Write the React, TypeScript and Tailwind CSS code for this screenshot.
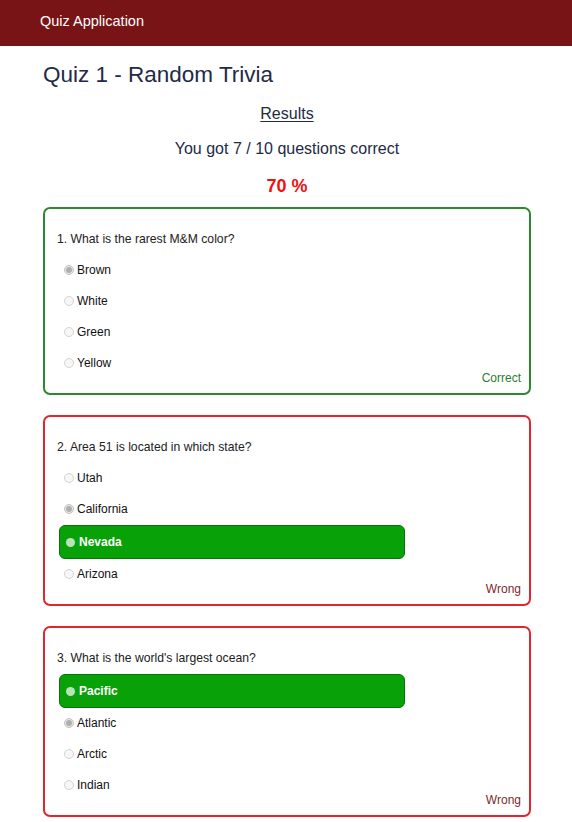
import React from "react";

interface Question {
  id: number;
  text: string;
  options: string[];
  selected: number;
  answer: number;
}

const questions: Question[] = [
  {
    id: 1,
    text: "What is the rarest M&M color?",
    options: ["Brown", "White", "Green", "Yellow"],
    selected: 0,
    answer: 0,
  },
  {
    id: 2,
    text: "Area 51 is located in which state?",
    options: ["Utah", "California", "Nevada", "Arizona"],
    selected: 1,
    answer: 2,
  },
  {
    id: 3,
    text: "What is the world's largest ocean?",
    options: ["Pacific", "Atlantic", "Arctic", "Indian"],
    selected: 1,
    answer: 0,
  },
];

function Radio({ checked }: { checked: boolean }) {
  return (
    <span
      className={`w-[10px] h-[10px] rounded-full border flex items-center justify-center shrink-0 ${
        checked ? "border-[#c4c4c4] bg-[#e6e6e6]" : "border-[#d4d4d4] bg-[#f7f7f7]"
      }`}
    >
      {checked && <span className="w-[6px] h-[6px] rounded-full bg-[#b0b0b0]" />}
    </span>
  );
}

function QuestionCard({ q }: { q: Question }) {
  const correct = q.selected === q.answer;
  return (
    <div
      className={`border-2 rounded-[7px] pt-[22px] pb-[7px] pl-3 pr-2 ${
        correct ? "border-[#2b8a2b]" : "border-[#e3262e]"
      }`}
    >
      <div className="text-[12.2px] leading-4 text-[#222]">
        {q.id}. {q.text}
      </div>
      <div className="mt-[11px] flex flex-col gap-[7px]">
        {q.options.map((opt, i) =>
          i === q.answer && !correct ? (
            <div
              key={opt}
              className="mt-[-3px] mb-[-4px] ml-[2px] w-[346px] h-[34px] rounded-[6px] border border-[#077207] bg-[#08a108] flex items-center gap-[4px] pl-[6px]"
            >
              <span className="w-[9px] h-[9px] rounded-full bg-[#b9e3b9]" />
              <span className="text-[12px] font-bold text-white">{opt}</span>
            </div>
          ) : (
            <div key={opt} className="h-[24px] flex items-center gap-[3px] pl-[7px]">
              <Radio checked={i === q.selected} />
              <span className="text-[12px] text-[#111]">{opt}</span>
            </div>
          ),
        )}
      </div>
      <div
        className={`mt-[-5px] text-right text-[12px] leading-4 ${
          correct ? "text-[#2e7d2e]" : "text-[#7c2b2b]"
        }`}
      >
        {correct ? "Correct" : "Wrong"}
      </div>
    </div>
  );
}

export default function App() {
  return (
    <div className="min-h-[822px] bg-white font-['Liberation_Sans',Arial,sans-serif]">
      <div className="h-[46px] bg-[#781416] pl-10 pt-[9px]">
        <span className="text-[14.5px] leading-5 text-white">Quiz Application</span>
      </div>

      <div className="ml-[43px] w-[488px] pb-6">
        <h1 className="mt-[15px] text-[22.5px] leading-7 text-[#232a45]">
          Quiz 1 - Random Trivia
        </h1>
        <div className="mt-[15px] text-center text-[16px] leading-5 text-[#232a45] underline underline-offset-2">
          Results
        </div>
        <div className="mt-[15px] text-center text-[16px] leading-5 text-[#232a45]">
          You got 7 / 10 questions correct
        </div>
        <div className="mt-[16px] text-center text-[18px] leading-[22px] font-bold text-[#ee1111]">
          70 %
        </div>

        <div className="mt-[10px] flex flex-col gap-[20px]">
          {questions.map((q) => (
            <QuestionCard key={q.id} q={q} />
          ))}
        </div>
      </div>
    </div>
  );
}
